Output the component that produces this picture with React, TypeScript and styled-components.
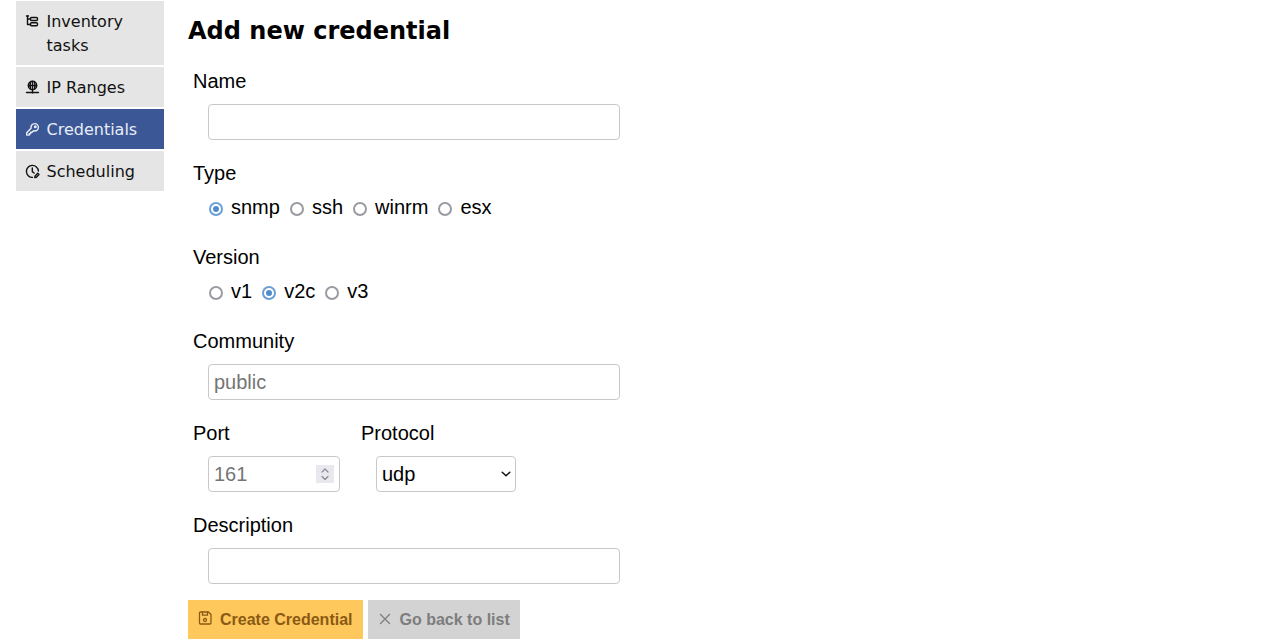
import React from "react";
import styled, { createGlobalStyle } from "styled-components";

const Global = createGlobalStyle`
  html, body { margin: 0; padding: 0; background: #fff; overflow: hidden; }
  * { box-sizing: border-box; }
`;

const spinner = encodeURIComponent(
  '<svg xmlns="http://www.w3.org/2000/svg" width="18" height="18" fill="none" stroke="#8a8a92" stroke-width="1.2" stroke-linecap="round" stroke-linejoin="round"><path d="M6 7l3-3 3 3M6 11.5l3 3 3-3"/></svg>'
);

const chevron = encodeURIComponent(
  '<svg xmlns="http://www.w3.org/2000/svg" width="10" height="6" fill="none" stroke="#111" stroke-width="1.5" stroke-linecap="round" stroke-linejoin="round"><path d="M1.2 1.2L5 4.8l3.8-3.6"/></svg>'
);

const Page = styled.div`
  display: flex;
  align-items: flex-start;
  height: 640px;
  padding-left: 16px;
  font-family: "Liberation Sans", Arial, sans-serif;
  color: #000;
`;

const Sidebar = styled.nav`
  width: 148px;
  flex: none;
  margin-right: 24px;
  padding-top: 1px;
  display: flex;
  flex-direction: column;
  gap: 2px;
`;

const NavItem = styled.a<{ $active?: boolean }>`
  display: flex;
  align-items: flex-start;
  padding: 9px 9px 7px;
  background: ${(p) => (p.$active ? "#3b5796" : "#e5e5e5")};
  color: ${(p) => (p.$active ? "#e8edf7" : "#111")};
  font-family: "DejaVu Sans", sans-serif;
  font-size: 16px;
  line-height: 24px;
`;

const NavIcon = styled.svg`
  width: 15px;
  height: 15px;
  flex: none;
  margin: 4px 6.5px 0 0;
  fill: none;
  stroke: currentColor;
  stroke-width: 1.4;
  stroke-linecap: round;
  stroke-linejoin: round;
`;

const Main = styled.main`
  width: 460px;
  flex: none;
`;

const Title = styled.h1`
  margin: 0;
  padding-top: 15px;
  font-family: "DejaVu Sans", sans-serif;
  font-weight: 700;
  font-size: 24px;
  line-height: 32px;
  height: 69px;
`;

const Field = styled.div<{ $bottom?: number }>`
  padding-left: 5px;
  margin-bottom: ${(p) => p.$bottom ?? 21}px;
`;

const Label = styled.label`
  display: block;
  font-size: 20px;
  line-height: 24px;
  margin-bottom: 11px;
`;

const GroupLabel = styled(Label)`
  margin-bottom: 10px;
`;

const TextInput = styled.input<{ $width?: number }>`
  display: block;
  margin-left: 15px;
  width: ${(p) => p.$width ?? 412}px;
  height: 36px;
  padding: 0 5px;
  border: 1px solid #c8c8c8;
  border-radius: 4px;
  background: #fff;
  font-family: inherit;
  font-size: 20px;
  outline: none;

  &::-webkit-inner-spin-button {
    appearance: none;
    opacity: 1;
    width: 18px;
    height: 18px;
    margin: 2px 0 0;
    background: #e8e8ee url("data:image/svg+xml,${spinner}") center no-repeat;
  }
`;

const SelectInput = styled.select`
  display: block;
  appearance: none;
  margin-left: 15px;
  width: 140px;
  height: 36px;
  padding: 0 5px;
  border: 1px solid #c8c8c8;
  border-radius: 4px;
  background: #fff url("data:image/svg+xml,${chevron}") right 4px center no-repeat;
  color: #000;
  font-family: inherit;
  font-size: 20px;
  outline: none;
`;

const Radios = styled.div`
  display: flex;
  align-items: center;
  height: 24px;
  margin-left: 16px;
  font-size: 20px;
  line-height: 24px;
`;

const RadioOption = styled.label`
  display: flex;
  align-items: center;
  margin-right: 10px;
`;

const Radio = styled.input.attrs({ type: "radio" })`
  appearance: none;
  width: 14px;
  height: 14px;
  margin: 3px 8px 0 0;
  border: 2px solid #9a9aa2;
  border-radius: 50%;
  background: #fff;
  display: grid;
  place-items: center;

  &:checked {
    border-color: #6a9fd6;
  }
  &:checked::after {
    content: "";
    width: 6px;
    height: 6px;
    border-radius: 50%;
    background: #4f8ccb;
  }
`;

const Columns = styled.div`
  display: flex;
`;

const Column = styled(Field)`
  margin-right: 16px;
`;

const Buttons = styled.div`
  display: flex;
  gap: 5px;
  margin-top: -5px;
`;

const Button = styled.button<{ $variant: "primary" | "muted" }>`
  display: flex;
  align-items: center;
  height: 39px;
  padding: 0 10px;
  border: 0;
  background: ${(p) => (p.$variant === "primary" ? "#fec85c" : "#d3d3d3")};
  color: ${(p) => (p.$variant === "primary" ? "#8a5a14" : "#7d7d7d")};
  font-family: inherit;
  font-size: 16px;
  font-weight: 700;
`;

const ButtonIcon = styled.svg<{ $lift: number }>`
  width: 14px;
  height: 14px;
  margin: 0 8px ${(p) => p.$lift}px 0;
  fill: none;
  stroke: currentColor;
  stroke-width: 1.3;
  stroke-linecap: round;
  stroke-linejoin: round;
`;

const types = ["snmp", "ssh", "winrm", "esx"];
const versions = ["v1", "v2c", "v3"];

export default function App() {
  return (
    <Page>
      <Global />
      <Sidebar>
        <NavItem>
          <NavIcon viewBox="0 0 15 15">
            <path d="M2.5 2v8.5h3M2.5 5h3" />
            <rect x="5.5" y="3.5" width="7" height="3" rx="1" />
            <rect x="5.5" y="8.8" width="7" height="3" rx="1" />
            <path d="M1.5 2h2" />
          </NavIcon>
          <span>Inventory tasks</span>
        </NavItem>
        <NavItem>
          <NavIcon viewBox="0 0 15 15">
            <circle cx="7.5" cy="5.5" r="4.2" />
            <path d="M3.5 5.5h8M7.5 1.5v8M5.5 2.5c-.8 2-.8 4 0 6M9.5 2.5c.8 2 .8 4 0 6M7.5 10v3M1.5 12.5h12" />
          </NavIcon>
          <span>IP Ranges</span>
        </NavItem>
        <NavItem $active>
          <NavIcon viewBox="0 0 15 15">
            <path d="M9.7 1.6a3.7 3.7 0 0 1 3.7 3.7 3.7 3.7 0 0 1-3.7 3.7c-.4 0-.8-.1-1.2-.2L7 10.3H5.6v1.4H4.2v1.4H1.7v-2.4l4.4-4.5a3.7 3.7 0 0 1 3.6-4.6z" />
            <circle cx="10.3" cy="4.7" r=".8" />
          </NavIcon>
          <span>Credentials</span>
        </NavItem>
        <NavItem>
          <NavIcon viewBox="0 0 15 15">
            <path d="M13.4 7a6 6 0 1 0-6 6.4" />
            <path d="M7.3 4v3.6l1.8 1.4" />
            <path d="M9.8 13.5l.3-1.6 2.6-2.6 1.3 1.3-2.6 2.6z" />
          </NavIcon>
          <span>Scheduling</span>
        </NavItem>
      </Sidebar>
      <Main>
        <Title>Add new credential</Title>
        <Field>
          <Label>Name</Label>
          <TextInput type="text" />
        </Field>
        <Field $bottom={26}>
          <GroupLabel>Type</GroupLabel>
          <Radios>
            {types.map((t) => (
              <RadioOption key={t}>
                <Radio name="type" defaultChecked={t === "snmp"} />
                {t}
              </RadioOption>
            ))}
          </Radios>
        </Field>
        <Field $bottom={26}>
          <GroupLabel>Version</GroupLabel>
          <Radios>
            {versions.map((v) => (
              <RadioOption key={v}>
                <Radio name="version" defaultChecked={v === "v2c"} />
                {v}
              </RadioOption>
            ))}
          </Radios>
        </Field>
        <Field>
          <Label>Community</Label>
          <TextInput type="text" placeholder="public" />
        </Field>
        <Columns>
          <Column>
            <Label>Port</Label>
            <TextInput type="number" placeholder="161" $width={132} />
          </Column>
          <Column>
            <Label>Protocol</Label>
            <SelectInput defaultValue="udp">
              <option>udp</option>
              <option>tcp</option>
            </SelectInput>
          </Column>
        </Columns>
        <Field>
          <Label>Description</Label>
          <TextInput type="text" />
        </Field>
        <Buttons>
          <Button $variant="primary">
            <ButtonIcon viewBox="0 0 14 14" $lift={3}>
              <path d="M2.5 1h8l2.5 2.5v8.5a1 1 0 0 1-1 1h-9.5a1 1 0 0 1-1-1v-10a1 1 0 0 1 1-1z" />
              <path d="M4.5 1v3.2h5V1" />
              <circle cx="7" cy="9" r="1.5" />
            </ButtonIcon>
            Create Credential
          </Button>
          <Button $variant="muted">
            <ButtonIcon viewBox="0 0 14 14" $lift={1}>
              <path d="M2.5 2.5l9 9M11.5 2.5l-9 9" />
            </ButtonIcon>
            Go back to list
          </Button>
        </Buttons>
      </Main>
    </Page>
  );
}
